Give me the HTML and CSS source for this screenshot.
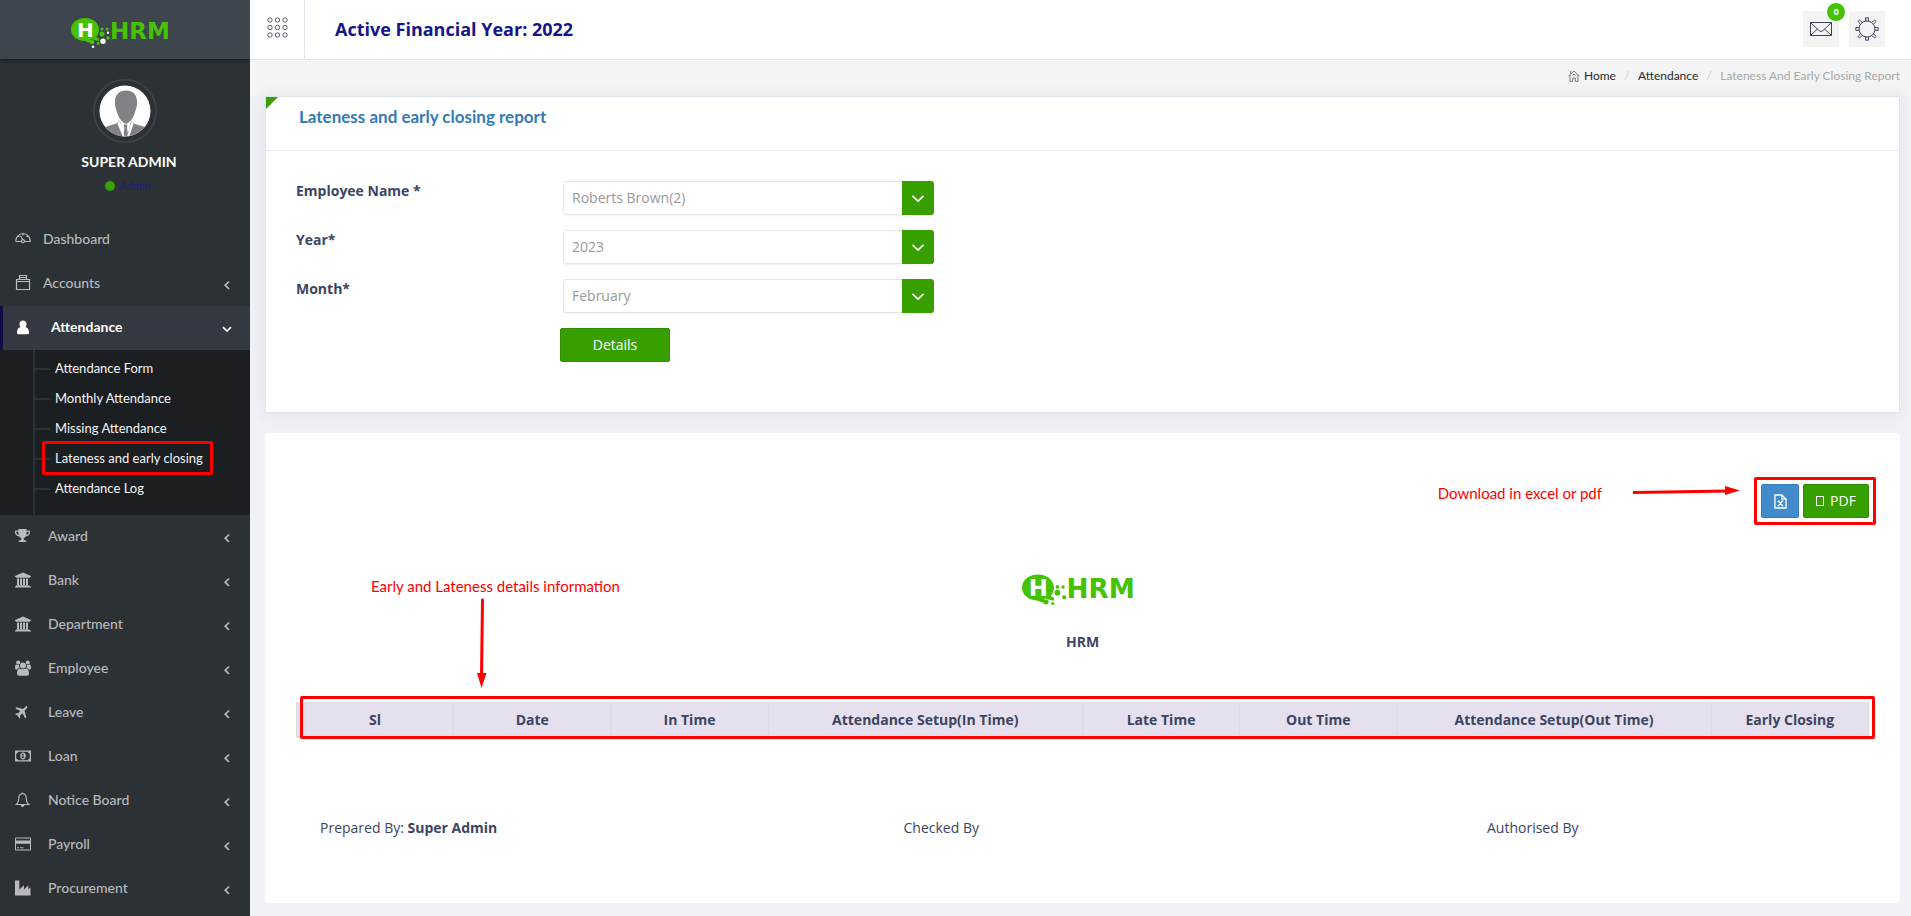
FILE: index.html
```html
<!DOCTYPE html>
<html lang="en">
<head>
<meta charset="utf-8">
<title>Lateness and early closing report</title>
<link rel="stylesheet" href="styles.css">
</head>
<body>
<svg class="defs" aria-hidden="true">
  <symbol id="bubble" viewBox="0 0 99 32">
    <path class="logo-green" d="M14 1C22 1 28 6 28 12.500c0 3-1 5.500-3 7.500l3 1.500v2.500l-5-1-3-1-1 4-5-2C6 24 0 19 0 12.500S6 1 14 1z"/>
    <circle class="logo-green" cx="31" cy="12" r="1.600"/><circle class="logo-green" cx="36" cy="12" r="1.500"/>
    <circle class="logo-green" cx="31" cy="17" r="2.500"/><circle class="logo-green" cx="37" cy="21" r="1.800"/>
    <circle class="logo-green" cx="21" cy="25" r="2.300"/><circle class="logo-green" cx="27" cy="26.500" r="1.400"/>
    <circle class="logo-white" cx="37" cy="15.700" r="1.200"/><circle class="logo-white" cx="32" cy="24.300" r="2.700"/>
    <circle class="logo-white" cx="22" cy="29.700" r="1.300"/>
  </symbol>
  <symbol id="chev" viewBox="0 0 10 10"><path class="line bold" d="M7 1.500L3.200 5.200 7 9"/></symbol>
  <symbol id="chev-down" viewBox="0 0 10 10"><path class="line bold" d="M1 3.200L5 7l4-3.800"/></symbol>
  <symbol id="caret" viewBox="0 0 14 14"><path class="line bold" d="M1.500 4.800L7 10l5.500-5.200"/></symbol>
  <symbol id="bank" viewBox="0 0 16 16"><path d="M8 .5L16 4v1h-1v.8H1V5H0V4zM2 6.500h2V13h1V6.500h2V13h1V6.500h2V13h1V6.500h2V13h.8v.8H1.200V13H2zM.5 14h15v.6h.5v1H0v-1h.5z"/></symbol>
</svg>
<div class="app">
  <aside class="sidebar">
    <a class="brand" href="#" aria-label="HRM"><svg class="brand-logo" viewBox="0 0 99 32"><use href="#bubble" width="99" height="32"/><text class="logo-h" x="6" y="20">H</text><text class="logo-text" x="39" y="22">HRM</text></svg></a>
    <div class="profile">
      <svg class="avatar" viewBox="0 0 64 64" aria-label="User photo">
        <defs><clipPath id="face"><circle cx="32" cy="32" r="25.500"/></clipPath></defs>
        <circle cx="32" cy="32" r="31.200" fill="none" stroke="#404348" stroke-width="1.600"/>
        <circle cx="32" cy="32" r="25.500" fill="#fff"/>
        <g clip-path="url(#face)" fill="#808285">
          <path d="M33 11.500c7 0 11 4.500 11 11 0 2 .3 3.500-.6 6-.6 2-1.200 4.500-2.800 8.500-1.600 3.500-4 6.500-7.600 8-3.600-1.500-6-4.500-7.600-8-1.600-4-2.200-6.500-2.800-8.500-.9-2.500-.6-4-.6-6 0-6.500 4-11 11-11z"/>
          <path d="M27 42l5 16H6V50l14-4.500c3-.8 5-1.500 6-4zM38 42l-4 16h24V50l-14-4.500c-3-.8-4-1.500-5-4zM30.500 45.500h4L34 49l1.500 9h-5.500l1.500-9z"/>
          <path d="M26 41l-1.500 4 5.500 13h1.500L30 50zM39 41l1.500 4L36 58h-1.500L36 50z" fill="#fff"/>
        </g>
      </svg>
      <strong class="user">SUPER ADMIN</strong>
      <span class="role"><i class="dot"></i><a href="#">Admin</a></span>
    </div>
    <nav class="menu">
      <a class="item near" href="#"><svg class="ico" viewBox="0 0 16 16"><path class="line" d="M.8 10.500C.5 6 4 2.500 8 2.500s7.500 3.500 7.200 8H10M.8 10.500H6M8 2.500v2M3 4.800l1.500 1M13 4.800l-1.500 1M5.500 5L8 9"/><circle class="line" cx="8" cy="10.200" r="1.500"/></svg><span>Dashboard</span></a>
      <a class="item near" href="#"><svg class="ico" viewBox="0 0 16 16"><path class="line" d="M1.500 4.500h13v10h-13zM1.500 6.500h13M4.500 4.500v-4h7v4M4.500 2.500h7"/></svg><span>Accounts</span><svg class="chev"><use href="#chev"/></svg></a>
      <a class="item open" href="#"><svg class="ico" viewBox="0 0 16 16"><path d="M8 1.500a3.500 3.500 0 013.500 3.700C11.500 6.500 11 7.500 10.300 8.200 12.500 8.300 14 10 14 14c0 .8-.5 1.200-1.200 1.200H3.200C2.500 15.200 2 14.800 2 14c0-4 1.500-5.700 3.700-5.800C5 7.500 4.500 6.500 4.500 5.200A3.500 3.500 0 018 1.500z"/></svg><span>Attendance</span><svg class="chev"><use href="#chev-down"/></svg></a>
      <div class="submenu">
        <a href="#">Attendance Form</a>
        <a href="#">Monthly Attendance</a>
        <a href="#">Missing Attendance</a>
        <a class="marked" href="#">Lateness and early closing</a>
        <a href="#">Attendance Log</a>
      </div>
      <a class="item" href="#"><svg class="ico" viewBox="0 0 16 16"><path fill-rule="evenodd" d="M3.500 1h8v1.500H15v1.700c0 2.500-2 4-4.300 4.300C10 9.500 9 10 8.700 10.500c-.3 1 .2 1.500 1.300 1.700.8.200 1.300.6 1.300 1.800H3.700c0-1.200.5-1.600 1.300-1.800 1.100-.2 1.600-.7 1.300-1.700C6 10 5 9.500 4.300 8.500 2 8.200 0 6.700 0 4.200V2.500h3.500zM1.200 3.700c0 1.700.9 2.900 2.500 3.300-.3-1-.4-2.100-.4-3.300zM13.800 3.700h-2.100c0 1.200-.1 2.300-.4 3.300 1.600-.4 2.500-1.600 2.500-3.300z"/></svg><span>Award</span><svg class="chev"><use href="#chev"/></svg></a>
      <a class="item" href="#"><svg class="ico"><use href="#bank"/></svg><span>Bank</span><svg class="chev"><use href="#chev"/></svg></a>
      <a class="item" href="#"><svg class="ico"><use href="#bank"/></svg><span>Department</span><svg class="chev"><use href="#chev"/></svg></a>
      <a class="item" href="#"><svg class="ico" viewBox="0 0 16 16"><circle cx="3.200" cy="2.600" r="2"/><circle cx="12.800" cy="2.600" r="2"/><path d="M4.300 8C3 8 2.600 8.800 2.300 9.500H1.500C.5 9.500 0 9 0 8c0-2 .3-3.500 1.300-3.500.5 0 1.200.9 3 .5C4 6.200 4.100 7.200 4.800 8zM11.700 8c1.300 0 1.700.8 2 1.500h.8c1 0 1.500-.5 1.500-1.500 0-2-.3-3.500-1.300-3.500-.5 0-1.200.9-3 .5.3 1.200.2 2.200-.5 3z"/><circle cx="8" cy="5.500" r="3"/><path d="M5 8.500c1 1 4.800 1 6 0 2.200 0 3 2 3 5 0 1.500-.8 2.200-2.200 2.200H4.200C2.800 15.700 2 15 2 13.500c0-3 .8-5 3-5z"/></svg><span>Employee</span><svg class="chev"><use href="#chev"/></svg></a>
      <a class="item" href="#"><svg class="ico" viewBox="0 0 16 16"><path d="M12 2.200c.6.500.2 1.700-.6 2.600L9.500 6.700l1.800 6.500-1.200 1-2.600-4.900L5 11.600l.3 1.900-1 .9-1.500-2.600L.2 10.300l.9-1 1.900.3 2.300-2.500L.4 4.500l1-1.200L8 5.100l1.900-1.900c.8-.8 1.700-1.300 2.100-1z"/></svg><span>Leave</span><svg class="chev"><use href="#chev"/></svg></a>
      <a class="item" href="#"><svg class="ico" viewBox="0 0 16 16"><path fill-rule="evenodd" d="M0 2.500h16v11H0zM1.200 5.600v4.800c1 .2 1.700.9 1.900 1.900h9.800c.2-1 .9-1.700 1.900-1.900V5.600c-1-.2-1.700-.9-1.900-1.900H3.100c-.2 1-.9 1.700-1.900 1.900zM8 4.600c1.700 0 2.800 1.500 2.800 3.400S9.700 11.400 8 11.400 5.200 9.900 5.200 8 6.300 4.600 8 4.600zM7.600 5.800L6.400 6.700l.4.600.5-.3v2.300h-.8v.8h2.800v-.8h-.8V5.800z"/></svg><span>Loan</span><svg class="chev"><use href="#chev"/></svg></a>
      <a class="item" href="#"><svg class="ico" viewBox="0 0 16 16"><path class="line" d="M7.500 .5v1.200c-2.700 0-3.700 2-3.700 4.500 0 3.500-1 5-2.500 6.300h12.400c-1.500-1.300-2.500-2.800-2.500-6.300 0-2.500-1-4.500-3.700-4.500"/><path d="M5.700 13h3.600c0 1.200-.8 2-1.800 2s-1.800-.8-1.800-2z"/></svg><span>Notice Board</span><svg class="chev"><use href="#chev"/></svg></a>
      <a class="item" href="#"><svg class="ico" viewBox="0 0 16 16"><path fill-rule="evenodd" d="M1 1.500h14c.6 0 1 .4 1 1v11c0 .6-.4 1-1 1H1c-.6 0-1-.4-1-1v-11c0-.6.4-1 1-1zM1 2.600v2h14v-2zM1 7.800v5.600h14V7.800zM2 11.300h2v1H2zM5 11.300h3.500v1H5z"/></svg><span>Payroll</span><svg class="chev"><use href="#chev"/></svg></a>
      <a class="item" href="#"><svg class="ico" viewBox="0 0 16 16"><path d="M0 .5h4.300v9L9 5.200v4.300l4.300-4.300v4.300l2.200-2.200V15.500H0z"/></svg><span>Procurement</span><svg class="chev"><use href="#chev"/></svg></a>
    </nav>
  </aside>
  <div class="page">
    <header class="topbar">
      <button class="toggle" type="button" aria-label="Toggle menu">
        <svg viewBox="0 0 21 21"><g class="line"><circle cx="3" cy="3" r="2.200"/><circle cx="10.500" cy="3" r="2.200"/><circle cx="18" cy="3" r="2.200"/><circle cx="3" cy="10.500" r="2.200"/><circle cx="10.500" cy="10.500" r="2.200"/><circle cx="18" cy="10.500" r="2.200"/><circle cx="3" cy="18" r="2.200"/><circle cx="10.500" cy="18" r="2.200"/><circle cx="18" cy="18" r="2.200"/></g></svg>
      </button>
      <h1 class="year">Active Financial Year: 2022</h1>
      <button class="tool" type="button" aria-label="Messages">
        <svg viewBox="0 0 24 24"><path class="line" d="M1.500 5.500h21v13h-21zM1.500 5.500l8.500 8c1.300 1.200 2.700 1.200 4 0l8.500-8M1.500 18.500l7-6.500M22.500 18.500l-7-6.500"/></svg>
        <span class="badge">0</span>
      </button>
      <button class="tool" type="button" aria-label="Settings">
        <svg viewBox="0 0 24 24"><g class="line"><circle cx="12" cy="12" r="8"/><path d="M10.600 4V.8h2.800V4M10.600 20v3.200h2.800V20M4 10.600H.8v2.800H4M20 10.600h3.200v2.800H20"/><path d="M5.500 7.200L3.600 5.300a1.200 1.200 0 011.700-1.700l1.900 1.900M18.500 7.200l1.900-1.900a1.200 1.200 0 00-1.700-1.700l-1.900 1.900M5.500 16.800l-1.900 1.900a1.200 1.200 0 001.700 1.700l1.900-1.900M18.500 16.800l1.900 1.900a1.200 1.200 0 01-1.700 1.700l-1.900-1.900"/></g></svg>
      </button>
    </header>
    <nav class="crumbs" aria-label="Breadcrumb">
      <a href="#"><svg viewBox="0 0 12 12"><path class="line" d="M.7 6L6 1l5.300 5M2 5v6.300h2.700V8h2.600v3.300H10V5M2.700 4V1M4.500 5.500L6 4l1.500 1.500"/></svg>Home</a>
      <span class="sep">/</span><a href="#">Attendance</a><span class="sep">/</span><span class="here">Lateness And Early Closing Report</span>
    </nav>
    <main class="content">
      <section class="card filter">
        <h2 class="card-title">Lateness and early closing report</h2>
        <form class="form">
          <div class="field"><label for="emp">Employee Name *</label><div class="pick"><select id="emp"><option>Roberts Brown(2)</option></select><span class="arrow"><svg><use href="#caret"/></svg></span></div></div>
          <div class="field"><label for="yr">Year*</label><div class="pick"><select id="yr"><option>2023</option></select><span class="arrow"><svg><use href="#caret"/></svg></span></div></div>
          <div class="field"><label for="mon">Month*</label><div class="pick"><select id="mon"><option>February</option></select><span class="arrow"><svg><use href="#caret"/></svg></span></div></div>
          <div class="actions"><button class="btn details" type="button">Details</button></div>
        </form>
      </section>
      <section class="card report">
        <div class="exports">
          <div class="export-group">
            <button class="btn excel" type="button" aria-label="Excel"><svg viewBox="0 0 14 16"><path class="line file" d="M1 1h7.500L13 5.500V15H1zM8.500 1v4.500H13"/><path class="line file" d="M4.800 7.500L9 12.500M9 7.500l-4.200 5M3.800 7.500h2M8 7.500h2M3.800 12.500h2M8 12.500h2"/></svg></button>
            <button class="btn pdf" type="button"><i class="tofu"></i>PDF</button>
          </div>
        </div>
        <div class="company">
          <svg class="company-logo" viewBox="0 0 99 32" aria-label="HRM"><use href="#bubble" width="99" height="32"/><text class="logo-h" x="6" y="20">H</text><text class="logo-text" x="39" y="22">HRM</text></svg>
          <strong>HRM</strong>
        </div>
        <div class="table-wrap">
          <table class="grid">
            <thead><tr><th>Sl</th><th>Date</th><th>In Time</th><th colspan="2">Attendance Setup(In Time)</th><th>Late Time</th><th>Out Time</th><th colspan="2">Attendance Setup(Out Time)</th><th>Early Closing</th></tr></thead>
          </table>
        </div>
        <div class="signs">
          <span>Prepared By: <b>Super Admin</b></span><span>Checked By</span><span>Authorised By</span>
        </div>
        <span class="note note-download">Download in excel or pdf</span>
        <svg class="note-arrow arrow-right" viewBox="0 0 107 12"><path d="M1 7.500L95 6" stroke="#f00" stroke-width="3" stroke-linecap="round"/><path d="M92 1l15 4.500L92 10z" fill="#f00"/></svg>
        <span class="note note-info">Early and Lateness details information</span>
        <svg class="note-arrow arrow-down" viewBox="0 0 12 90"><path d="M6.500 2L5.500 78" stroke="#f00" stroke-width="3" stroke-linecap="round"/><path d="M1 75h9.500L5.500 90z" fill="#f00"/></svg>
      </section>
    </main>
  </div>
</div>
</body>
</html>
```

FILE: styles.css
```css
* { box-sizing: border-box; }
body {
  margin: 0;
  background: #f1f2f7;
  color: #3b4563;
  font: 14px/20px "Open Sans", "Noto Sans", sans-serif;
}
a { color: inherit; text-decoration: none; }
button { font: inherit; border: 0; padding: 0; cursor: pointer; }
svg { display: block; fill: currentColor; }
.defs { position: absolute; width: 0; height: 0; }
.line { fill: none; stroke: currentColor; stroke-width: 1; }
.bold { stroke-width: 1.7; }
.file { stroke-width: 1.4; }
.logo-green, .logo-text { fill: #45c203; }
.logo-white, .logo-h { fill: #fff; }
.logo-text { font: bold 23px "DejaVu Sans", sans-serif; }
.logo-h { font: bold 20px "DejaVu Sans", sans-serif; }

.app { display: flex; min-height: 100vh; }

/* Sidebar */
.sidebar {
  flex: 0 0 250px;
  background: #2c3136;
  color: #b8babc;
  font-family: Lato, "Open Sans", sans-serif;
}
.brand {
  display: flex;
  justify-content: center;
  padding: 17px 9px 10px 0;
  background: #3f454c;
  box-shadow: 0 1px 4px rgba(0, 0, 0, .5);
}
.brand-logo, .company-logo { overflow: visible; }
.brand-logo { width: 99px; height: 32px; }
.profile { display: flex; flex-direction: column; align-items: center; padding: 20px 0 22px; }
.avatar { width: 64px; height: 64px; }
.user { margin: 9px 0 4px 8px; color: #fff; font-size: 14px; }
.role { display: flex; align-items: center; gap: 4px; margin-left: 6px; color: #1c1c84; font-size: 11px; }
.dot { width: 10px; height: 10px; border-radius: 50%; background: #37a000; }
.item { display: flex; align-items: center; height: 44px; padding: 0 18px 2px 15px; font-size: 14px; font-weight: 500; }
.ico { flex: none; width: 16px; height: 16px; margin-right: 17px; }
.ico .line { stroke-width: 1.2; }
.near .ico { margin-right: 12px; }
.item span { flex: 1; }
.chev { width: 10px; height: 10px; margin-top: 3px; }
.open { padding-left: 12px; border-left: 3px solid #120e45; background: #343840; color: #fff; font-weight: 700; }
.open .ico { margin-right: 20px; }
.submenu {
  position: relative;
  padding: 3px 0 12px 33px;
  background: #1c1f22;
  color: #f4f4f4;
  font-size: 13px;
}
.submenu::before { content: ""; position: absolute; left: 33px; top: 0; bottom: 0; width: 2px; background: #2c3136; }
.submenu a { position: relative; display: block; padding-left: 22px; line-height: 30px; }
.submenu a::before { content: ""; position: absolute; left: 2px; top: 15px; width: 15px; height: 2px; background: #2c3136; }
.submenu .marked::after { content: ""; position: absolute; left: 9px; right: 37px; top: -2px; bottom: -2px; border: 3px solid #f00; border-radius: 2px; }

/* Top bar */
.page { flex: 1; min-width: 0; }
.topbar { display: flex; align-items: center; height: 60px; padding: 0 26px 1px 0; border-bottom: 1px solid #e1e4ed; background: #fff; }
.toggle { align-self: stretch; width: 55px; padding: 0 17px 4px; border-right: 1px solid #e1e4ed; background: none; color: #5a5d6c; }
.toggle svg { width: 21px; height: 21px; }
.year { flex: 1; margin: 0; padding-left: 30px; color: #15158b; font-size: 18px; font-weight: 700; }
.tool { position: relative; display: grid; place-items: center; width: 36px; height: 36px; margin-left: 10px; background: #f4f4f4; color: #3b4563; }
.tool svg { width: 24px; height: 24px; }
.badge {
  position: absolute;
  top: -9px;
  right: -7px;
  width: 20px;
  height: 20px;
  border: 1px solid #fff;
  border-radius: 50%;
  background: #45c203;
  color: #fff;
  font: bold 9px/18px "Open Sans", sans-serif;
}
.crumbs { display: flex; justify-content: flex-end; height: 36px; padding-right: 11px; background: #f4f4f4; color: #2b2b2b; font: 12px/32px Lato, "Open Sans", sans-serif; }
.crumbs a { display: flex; align-items: center; height: 32px; }
.crumbs svg { width: 12px; height: 12px; margin-right: 4px; color: #777; }
.sep { width: 22px; color: #ccc; text-align: center; }
.here { color: #a8a8a8; }

/* Cards */
.content { display: flex; flex-direction: column; gap: 20px; padding: 0 11px 13px 15px; }
.card { position: relative; background: #fff; }
.filter { border: 1px solid #e1e4ed; box-shadow: 0 1px 15px 1px rgba(69, 65, 78, .08); }
.filter::before { content: ""; position: absolute; left: 0; top: 0; border-top: 12px solid #37a000; border-right: 12px solid transparent; }
.card-title { margin: 0; padding: 10px 33px 23px; border-bottom: 1px solid #e8eaf1; color: #337ab7; font: bold 17px/20px Lato, "Open Sans", sans-serif; }
.form { display: flex; flex-direction: column; gap: 15px; padding: 30px 30px 50px; }
.field { display: flex; }
.field label { width: 267px; font-weight: 700; }
.pick { position: relative; flex: 0 1 371px; }
.pick select {
  width: 100%;
  height: 34px;
  padding: 0 40px 0 8px;
  appearance: none;
  border: 1px solid #e4e5e7;
  border-radius: 3px;
  background: #fff;
  box-shadow: 0 1px 2px rgba(0, 0, 0, .05);
  color: #999;
  font: inherit;
}
.arrow { position: absolute; top: 0; right: 0; bottom: 0; display: grid; place-items: center; width: 32px; border-radius: 0 3px 3px 0; background: #37a000; color: #fff; pointer-events: none; }
.arrow svg { width: 14px; height: 14px; }
.actions { padding-left: 264px; }
.btn { height: 34px; border: 1px solid #318d01; border-radius: 2px; background: #37a000; color: #fff; }
.details { width: 110px; font-weight: 500; }

/* Report */
.report { padding: 44px 24px 65px 31px; border-radius: 4px; }
.exports { display: flex; justify-content: flex-end; }
.export-group { display: flex; gap: 4px; padding: 4px; border: 3px solid #f00; border-radius: 2px; }
.excel { display: grid; place-items: center; width: 38px; border-color: #357ebd; background: #428bca; }
.excel svg { width: 13px; height: 15px; }
.pdf { display: flex; align-items: center; justify-content: center; gap: 6px; width: 66px; }
.tofu { width: 8px; height: 10px; border: 1px solid #fff; }
.company { display: flex; flex-direction: column; align-items: center; margin: 48px 7px 0 0; }
.company-logo { width: 113px; height: 37px; margin-right: 9px; }
.company strong { margin: 22px 0 50px; font-weight: 700; }
.table-wrap { position: relative; margin-right: 7px; }
.table-wrap::after { content: ""; position: absolute; left: 4px; right: -6px; top: -6px; bottom: -1px; border: 3px solid #f00; border-radius: 2px; }
.grid { width: 100%; border-collapse: collapse; table-layout: fixed; }
.grid th { height: 36px; padding: 0; border: solid #dcdce0; border-width: 0 1px; background: #e6e0ee; font-weight: 700; }
.signs { display: grid; grid-template-columns: 37% 37% 1fr; margin: 80px 3px 0 0; }
.signs span { padding-left: 24px; }
.signs b { font-weight: 700; }
.note { position: absolute; color: #f00; font: 15px/20px Lato, "Open Sans", sans-serif; white-space: nowrap; }
.note-download { top: 50px; right: 298px; }
.note-info { top: 143px; left: 106px; }
.note-arrow { position: absolute; }
.arrow-right { top: 52px; right: 160px; width: 107px; height: 12px; }
.arrow-down { top: 165px; left: 211px; width: 12px; height: 90px; }
```
